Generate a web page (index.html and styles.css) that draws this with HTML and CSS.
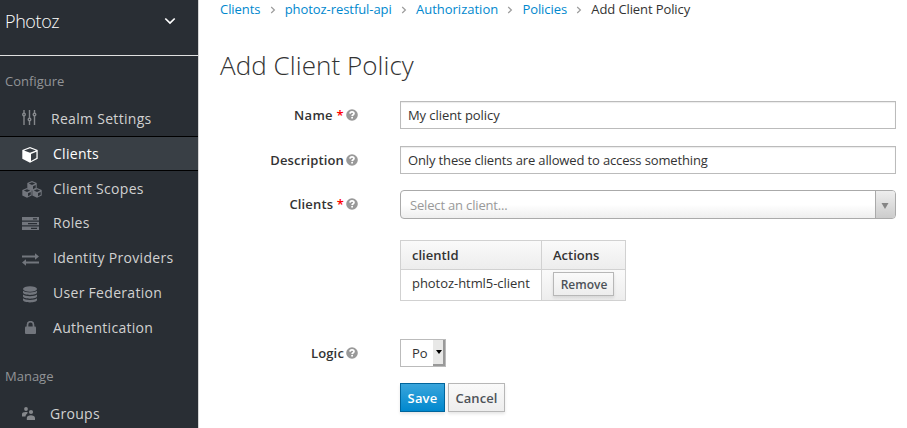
FILE: index.html
```html
<!DOCTYPE html>
<html lang="en">
<head>
<meta charset="utf-8">
<title>Add Client Policy</title>
<link rel="stylesheet" href="styles.css">
</head>
<body>
<svg class="defs" width="0" height="0">
  <symbol id="help" viewBox="0 0 12 12"><circle cx="6" cy="6" r="5.8" fill="#999"/><path d="M4 4.6C4.100 3.300 5 2.800 6 2.800s2 .6 2 1.700C8 5.800 6.200 5.700 6.100 7.100" fill="none" stroke="#fff" stroke-width="1.700"/><path d="M5.200 8h1.800v1.600H5.200z" fill="#fff"/></symbol>
  <symbol id="sep" viewBox="0 0 6 8"><path d="M1.200 1L4.400 4 1.200 7" fill="none" stroke="#9c9c9c" stroke-width="1.200"/></symbol>
  <symbol id="cubelet" viewBox="0 0 10 10"><path d="M5 0l4.700 2v5.500L5 9.800.3 7.500V2z" fill="#72767d"/><path d="M1.800 2.500L5 1.300l3.200 1.200L5 3.900z" fill="#292e34"/><path d="M6 5.300l2.700-1.200v2.700L6 8.200z" fill="#292e34"/></symbol>
</svg>
<div class="app">
  <nav class="sidebar">
    <div class="realm"><span>Photoz</span><svg width="12" height="8" viewBox="0 0 12 8"><path d="M1.300 1.500L6 6l4.700-4.500" fill="none" stroke="#fff" stroke-width="1.700"/></svg></div>
    <h2 class="configure">Configure</h2>
    <ul>
      <li class="item realm-settings"><span class="icon"><svg width="15" height="15" viewBox="0 0 15 15" fill="none" stroke="#85888c" stroke-width="1.400"><path d="M2 0v3M2 6v9M7.500 0v8M7.500 11v4M12.500 0v3M12.500 6v9"/><circle cx="2" cy="4.500" r="1.300"/><circle cx="7.500" cy="9.500" r="1.300"/><circle cx="12.500" cy="4.500" r="1.300"/></svg></span><span>Realm Settings</span></li>
      <li class="item active"><span class="icon"><svg width="16" height="16" viewBox="0 0 16 16"><path d="M8 0l7.700 3v8.800L8 15.800.3 11.800V3z" fill="#fff"/><path d="M2 3.500L8 1.300l6 2.200-6 2.300zM9 7l5.400-2.200v6.200L9 13.900z" fill="#393f45"/></svg></span><span>Clients</span></li>
      <li class="item"><span class="icon"><svg width="20" height="17" viewBox="0 0 20 17"><use href="#cubelet" x="5" y="0" width="10" height="10"/><use href="#cubelet" x="0" y="7" width="10" height="10"/><use href="#cubelet" x="10" y="7" width="10" height="10"/></svg></span><span>Client Scopes</span></li>
      <li class="item roles"><span class="icon"><svg width="17" height="13" viewBox="0 0 17 13"><path d="M0 0h17v3.500H0zM0 4.800h17v3.400H0zM0 9.600h17V13H0z" fill="#72767d"/><path d="M11 1.200h4v1.200h-4zM6 6h9v1.200H6zM9 10.800h6V12H9z" fill="#292e34"/></svg></span><span>Roles</span></li>
      <li class="item"><span class="icon"><svg width="17" height="13" viewBox="0 0 17 13"><path d="M0 2.500h13V.3l4 3.200-4 3.200V4.500H0zM17 8.500H4V6.300L0 9.500l4 3.200v-2.200h13z" fill="#72767d"/></svg></span><span>Identity Providers</span></li>
      <li class="item"><span class="icon"><svg width="16" height="17" viewBox="0 0 16 17" fill="#72767d"><ellipse cx="8" cy="3" rx="7" ry="2.800"/><path id="disk" d="M1 4.800c2.500 2.300 11.500 2.300 14 0v1.800c0 3.200-14 3.200-14 0z"/><use href="#disk" y="3.700"/><use href="#disk" y="7.400"/></svg></span><span>User Federation</span></li>
      <li class="item"><span class="icon lock"><svg width="11" height="13" viewBox="0 0 11 13"><path d="M2.500 6V3.700a3 3 0 0 1 6 0V6" fill="none" stroke="#72767d" stroke-width="1.700"/><rect y="5.500" width="11" height="7.500" rx="1" fill="#72767d"/></svg></span><span>Authentication</span></li>
    </ul>
    <h2 class="manage">Manage</h2>
    <ul>
      <li class="item groups"><span class="icon"><svg width="13" height="13" viewBox="0 0 13 13" fill="#85888c"><circle cx="4" cy="2" r="1.900"/><circle cx="9" cy="5" r="2.100"/><path d="M0 9.500V7.300C0 5.500 2 4.700 5.700 5.200c0 1.800-1.900 1.700-2.200 4.300zM4.800 13v-2c0-3.700 8.200-3.700 8.200 0v2z"/></svg></span><span>Groups</span></li>
    </ul>
  </nav>
  <main>
    <div class="crumbs"><a>Clients</a><svg class="sep"><use href="#sep"/></svg><a>photoz-restful-api</a><svg class="sep"><use href="#sep"/></svg><a class="auth">Authorization</a><svg class="sep"><use href="#sep"/></svg><a>Policies</a><svg class="sep"><use href="#sep"/></svg><span class="current">Add Client Policy</span></div>
    <h1>Add Client Policy</h1>
    <div class="row name"><label>Name <b>*</b><svg class="help"><use href="#help"/></svg></label><div class="field">My client policy</div></div>
    <div class="row desc"><label>Description<svg class="help"><use href="#help"/></svg></label><div class="field">Only these clients are allowed to access something</div></div>
    <div class="row clients"><label>Clients <b>*</b><svg class="help"><use href="#help"/></svg></label><div class="combo"><span>Select an client...</span><i><svg width="8" height="6" viewBox="0 0 8 6"><path d="M.5 0h7L4 6z" fill="#858585"/></svg></i></div></div>
    <div class="table">
      <div class="th">clientId</div><div class="th">Actions</div>
      <div class="td">photoz-html5-client</div><div class="td actions"><button class="remove">Remove</button></div>
    </div>
    <div class="row logic"><label>Logic<svg class="help"><use href="#help"/></svg></label><div class="select"><span>Po</span><i><svg width="6" height="4" viewBox="0 0 6 4"><path d="M0 0h6L3 4z"/></svg></i></div></div>
    <div class="buttons"><button class="save">Save</button><button class="cancel">Cancel</button></div>
  </main>
</div>
</body>
</html>
```
FILE: styles.css
```css
* { box-sizing: border-box; }
body { margin: 0; background: #fff; color: #333; font: 13px/18px "Open Sans", sans-serif; overflow: hidden; }
.defs { display: block; }
.app { display: flex; height: 428px; }
.sidebar { width: 199px; height: 428px; overflow: hidden; background: #292e34; border-right: 1px solid #d5d5d5; color: #d1d1d1; }
.realm { display: flex; justify-content: space-between; align-items: center; height: 56px; padding: 0 22px 13px 5px; border-bottom: 1px solid #e0e0e0; font-size: 18px; font-weight: 300; letter-spacing: -.4px; color: #fff; }
h2 { margin: 0; padding-left: 5px; font-size: 13px; font-weight: 400; line-height: 18px; color: #929497; }
.configure { padding-top: 16px; height: 45px; }
.manage { padding-top: 22px; height: 51px; }
ul { margin: 0; padding: 0; list-style: none; }
.item { display: flex; align-items: center; height: 34.8px; padding-left: 22px; font-size: 14px; letter-spacing: .3px; white-space: nowrap; }
.icon { width: 31px; display: flex; padding-top: 2px; }
.realm-settings { height: 35px; }
.realm-settings .icon { width: 29px; padding: 0 0 2px; }
.active { height: 35.3px; background: #393f45; border-top: 1px solid #000; border-bottom: 1px solid #000; color: #fff; }
.active .icon { padding-top: 3px; }
.roles .icon { padding-top: 1px; }
.lock { padding-left: 3px; padding-top: 0; }
.groups .icon { width: 28px; padding: 0 0 1px; }
main { flex: 1; padding: 0 11px 0 21px; }
.crumbs { display: flex; align-items: center; height: 18px; letter-spacing: -.06px; white-space: nowrap; }
.crumbs a { color: #0088ce; }
.crumbs .auth { letter-spacing: 0; }
.crumbs .current { letter-spacing: -.1px; }
.sep { width: 6px; height: 8px; margin: 2px 9px 0 9.2px; }
h1 { margin: 29px 0 0; height: 36px; font-size: 26px; line-height: 36px; font-weight: 300; letter-spacing: .06px; }
.row { display: flex; align-items: center; height: 29px; }
label { display: flex; align-items: center; justify-content: flex-end; width: 138px; margin-right: 42px; font-weight: 600; letter-spacing: .15px; white-space: pre; }
label b { color: #f00; font-weight: 600; }
.help { width: 12px; height: 12px; margin: 0 0 0 2px; }
.name { margin-top: 17px; }
.name label { letter-spacing: .3px; }
.desc { margin-top: 16px; }
.clients { margin-top: 16px; }
.clients label { padding-bottom: 1px; }
.field { flex: 1; height: 28px; border: 1px solid #bbb; padding: 0 7px; line-height: 27px; letter-spacing: -.14px; box-shadow: inset 0 1px 1px rgba(0,0,0,.08); }
.name .field { letter-spacing: -.07px; }
.combo { flex: 1; display: flex; height: 29px; border: 1px solid #aaa; border-radius: 4px; background: linear-gradient(#fff 50%, #eee); color: #999; line-height: 29px; letter-spacing: -.17px; padding-left: 9px; overflow: hidden; }
.combo span { flex: 1; }
.combo i { width: 20px; display: flex; align-items: center; justify-content: center; padding: 3px 1px 0 0; border-left: 1px solid #aaa; background: linear-gradient(#eee, #ccc); }
.table { display: grid; grid-template-columns: 141px 84px; grid-template-rows: 29px 31px; width: 226px; margin: 21px 0 0 180px; border: 1px solid #d1d1d1; border-width: 1px 0 0 1px; }
.table > div { border: 1px solid #d1d1d1; border-width: 0 1px 1px 0; padding-left: 11px; line-height: 28px; }
.table .td { line-height: 26px; letter-spacing: -.05px; }
.table .th { font-weight: 600; background: linear-gradient(#fafafa, #ededed); }
.table .actions { padding-top: 2px; background: linear-gradient(#fafafa, #ededed); line-height: 1; }
button { display: flex; align-items: center; justify-content: center; padding: 0; border: 1px solid #b7b7b7; background: linear-gradient(#fafafa, #ededed); color: #4d5258; font: 600 13px/18px "Open Sans", sans-serif; box-shadow: 0 2px 3px rgba(3,3,3,.1); }
.remove { width: 61px; height: 24px; padding: 1px 0 0 1px; font-size: 12px; }
.logic { margin-top: 37px; }
.select { display: flex; width: 46px; height: 28px; border: 1px solid #bbb; line-height: 27px; padding-left: 11px; }
.select span { width: 21px; }
.select i { width: 12px; display: flex; align-items: center; justify-content: center; background: #e8e8e7; border: solid #999; border-width: 0 2px 2px 0; }
.select svg { margin-left: 1px; }
.buttons { display: flex; gap: 3px; margin: 16px 0 0 180px; }
.save { width: 45px; height: 29px; color: #fff; border-color: #00659c; background: linear-gradient(#39a5dc, #0088ce); letter-spacing: .2px; }
.cancel { width: 57px; height: 29px; letter-spacing: .1px; }
```
